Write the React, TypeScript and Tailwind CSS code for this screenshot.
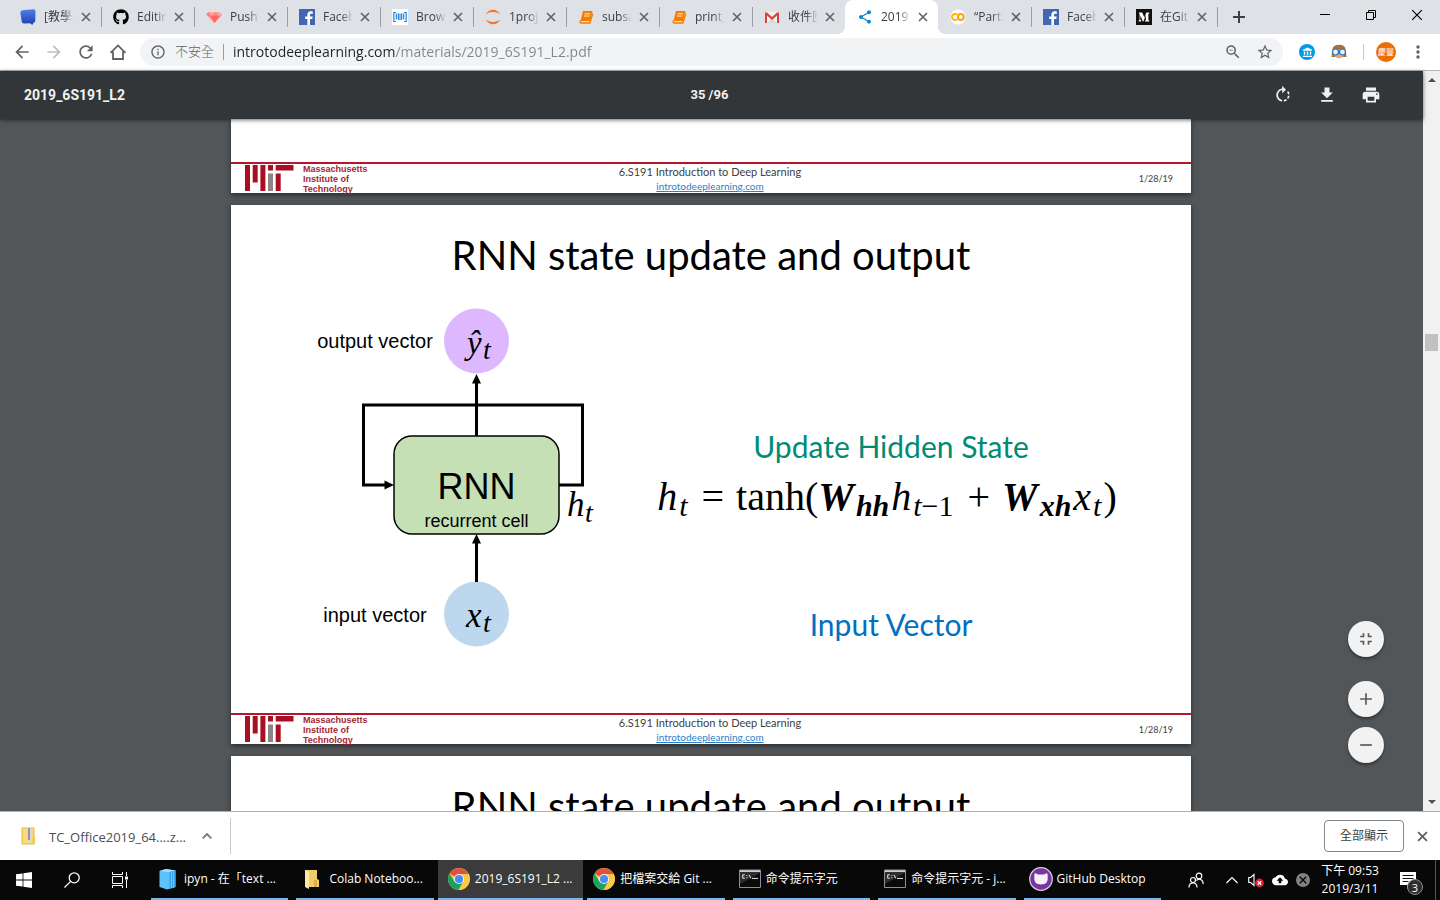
import type { ReactNode } from "react";
import {
  MdArrowBack,
  MdArrowForward,
  MdRefresh,
  MdInfoOutline,
  MdZoomOut,
  MdStarBorder,
  MdMoreVert,
  MdRotateRight,
  MdFileDownload,
  MdPrint,
  MdFullscreenExit,
  MdAdd,
  MdRemove,
  MdShare,
  MdAccountBalance,
  MdCloudUpload,
} from "react-icons/md";
import { FaGithub } from "react-icons/fa";

/* ---------- small drawings ---------- */

function Cross({ className }: { className: string }) {
  return (
    <svg viewBox="0 0 10 10" className={className} fill="none" stroke="currentColor">
      <path d="M1 1l8 8M9 1l-8 8" />
    </svg>
  );
}

function BlueNote() {
  return (
    <svg viewBox="0 0 16 16" className="size-4">
      <defs>
        <linearGradient id="note" x1="0" y1="0" x2="0" y2="1">
          <stop offset="0" stopColor="#4f80e6" />
          <stop offset="1" stopColor="#1b3fb4" />
        </linearGradient>
      </defs>
      <path d="M2.500 1.300 13.500.3Q15.600.3 15.500 2.500L15.300 11.500Q15.200 13.600 13.300 13.900L12.300 16 10 14.300 4 14.400Q2 14.400 1.700 12.500L.4 4Q.2 1.600 2.500 1.300Z" fill="url(#note)" />
    </svg>
  );
}

function Diamond() {
  return (
    <svg viewBox="0 0 16 16" className="size-4">
      <path d="M3 3h10l3 3-7.500 8L0 5z" fill="#ff8080" />
      <path d="M3 3l2 4 5-4zM10 3l3 4 3-1-3-3z" fill="#ffa9a4" />
      <path d="M5 7h8l-4.500 7z" fill="#f66" />
    </svg>
  );
}

function Facebook() {
  return (
    <svg viewBox="0 0 16 16" className="size-4">
      <path d="M0 0h16v16H0z" fill="#4267b2" />
      <path d="M11 16V10h2.300l.4-2.500H11V6c0-.9.400-1.300 1.400-1.300h1.400V2.400C13.300 2.300 12.500 2.200 11.700 2.200 9.600 2.200 8.400 3.500 8.400 5.700v1.800H6.200V10h2.200v6z" fill="#fff" />
    </svg>
  );
}

function Brackets() {
  return (
    <svg viewBox="0 0 16 16" className="size-4">
      <path d="M0 0h16v16H0z" fill="#fff" />
      <path d="M4 3.500H1.800v9H4M12 3.500h2.200v9H12" fill="none" stroke="#1e88e5" strokeWidth="1.200" />
      <path d="M4.500 4.500v6M6.800 4.500v6.500M9.200 4.500v6.500M11.500 4.500v6" stroke="#2e8fe8" strokeWidth="1.600" />
    </svg>
  );
}

function Jupyter() {
  return (
    <svg viewBox="0 0 16 16" className="size-4">
      <path d="M1 5.500C3 -.8 13 -.8 15 5.500 12 2.200 4 2.200 1 5.500ZM1 10.500C3 16.800 13 16.800 15 10.500 12 13.800 4 13.800 1 10.500Z" fill="#f37726" />
    </svg>
  );
}

function Notebook() {
  return (
    <svg viewBox="0 0 16 16" className="size-4">
      <path d="M5 2h9.500L12 12H2.500z" fill="#f57c00" />
      <path d="M2.600 11.500Q1.300 14 3.200 14h8.600L14.800 4.500" fill="none" stroke="#f57c00" strokeWidth="1.400" />
      <path d="M6.600 4.800h5.400M6 7h5.400" stroke="#fff3e0" strokeWidth="1" />
    </svg>
  );
}

function Gmail() {
  return (
    <svg viewBox="0 0 16 16" className="size-4">
      <path d="M2 3h12v11H2z" fill="#f2f2f2" />
      <path d="M3 14l5-4.500 5 4.500z" fill="#dadada" />
      <path d="M1 3.500h2L8 8l5-4.500h2V14h-2V6.500L8 11 3 6.500V14H1z" fill="#d6473a" />
    </svg>
  );
}

function Colab() {
  return (
    <svg viewBox="0 0 16 16" className="size-4">
      <circle cx="8" cy="8" r="7.500" fill="#fff" />
      <path d="M7 5.900a2.900 2.900 0 1 0 0 4.200" fill="none" stroke="#fbbc04" strokeWidth="2" />
      <circle cx="10.800" cy="8" r="2.900" fill="none" stroke="#f9a01b" strokeWidth="2" />
    </svg>
  );
}

function Medium() {
  return (
    <svg viewBox="0 0 16 16" className="size-4">
      <path d="M0 0h16v16H0z" fill="#12100e" />
      <path d="M3 3.500h3.200L8.400 8.600 10.400 3.500H13.300V4.300L12.400 5V11l.9.700v.8H9V11.700l.9-.7V6.200L7.400 12.500H6.900L4.300 6.600V10.700L5.300 11.800V12.500H2.600V11.800l1-1.100V5.200L3 4.300z" fill="#fff" />
    </svg>
  );
}

function Home() {
  return (
    <svg viewBox="0 0 20 20" className="size-5" fill="none" stroke="#5f6368" strokeWidth="1.800">
      <path d="M5 9.500V17h10V9.500M2.500 10.800 10 3.400 17.500 10.800" />
    </svg>
  );
}

function Chrome() {
  return (
    <svg viewBox="0 0 24 24" className="size-[22px]">
      <circle cx="12" cy="12" r="12" fill="#fbc943" />
      <path d="M12 12 1.600 6A12 12 0 0 1 22.400 6.500H12z" fill="#de5246" />
      <path d="M1.600 6A12 12 0 0 0 11.500 24L16.800 14.800 12 12 7.200 15z" fill="#1aa260" />
      <path d="M12 6.500h10.400A12 12 0 0 1 11.500 24l5.300-9.200z" fill="#fbc943" />
      <circle cx="12" cy="12" r="5.500" fill="#f1f1f1" />
      <circle cx="12" cy="12" r="4.400" fill="#4a8af4" />
    </svg>
  );
}

function NotebookBlue() {
  return (
    <svg viewBox="0 0 22 22" className="size-[22px]">
      <path d="M2.500 3 9 1l9.500 1.500V19L10 21.500 2.500 19z" fill="#5fc3fb" />
      <path d="M2.500 3 9 1l9.500 1.500-6 1.500z" fill="#a6e0ff" />
      <path d="M12.500 4l6-1.500V19l-6 2z" fill="#38a4ec" />
      <path d="M14.500 4v16M16.500 3.500V20" stroke="#78cbfb" strokeWidth=".8" />
    </svg>
  );
}

function Folder() {
  return (
    <svg viewBox="0 0 22 22" className="size-[22px]">
      <path d="M3 2h12v9l2 1v7H3z" fill="#f0cc6c" />
      <path d="M3 2l4 2v17l-4-2z" fill="#ffe8a2" />
      <path d="M12 12h3v7h-3z" fill="#dcae47" />
    </svg>
  );
}

function Terminal() {
  return (
    <svg viewBox="0 0 22 20" className="h-5 w-[22px]">
      <path d="M.5 1h21v17.500H.5z" fill="#0a0a0a" stroke="#8c9094" />
      <path d="M1 1.200h20v2H1z" fill="#c9d0d6" />
      <path d="M1 4h20L1 15z" fill="#2c2c2c" />
      <path d="M5.800 5.800H3.700v3.400h2.100M7.800 6.200v.9M7.800 8.300v.9M10 5.800l1.800 3.600M13 9.400h6" stroke="#eee" fill="none" />
    </svg>
  );
}

function GitHubDesktop() {
  return (
    <svg viewBox="0 0 24 24" className="size-6">
      <circle cx="12" cy="12" r="11.300" fill="#7b35a0" stroke="#d9cfe0" strokeWidth="1.200" />
      <path d="M6 6 9 7.500h6L18 6Q19 8 18.700 10 19.500 17.500 12 17.500T5.300 10Q5 8 6 6Z" fill="#f4f2f5" />
    </svg>
  );
}

function MitLogo() {
  return (
    <svg viewBox="0 0 50 26" className="h-[26px] w-[50px]">
      <path d="M0 0h5v26H0zM7.700 0h5v17.500h-5zM15.400 0h5v26h-5zM23 0h5v5.500h-5zM30.700 8.500h5V26h-5zM30.700 0H43.500v5.500H30.700zM40 0h8.500v5.500H40z" fill="#a80f22" />
      <path d="M23 8.500h5V26h-5z" fill="#8a8688" />
    </svg>
  );
}

/* ---------- browser chrome ---------- */

type Tab = { icon: ReactNode; title: string; active?: boolean };

const tabs: Tab[] = [
  { icon: <BlueNote />, title: "[教學]" },
  { icon: <FaGithub className="size-4 text-black" />, title: "Editing" },
  { icon: <Diamond />, title: "Push" },
  { icon: <Facebook />, title: "Faceb" },
  { icon: <Brackets />, title: "Brow" },
  { icon: <Jupyter />, title: "1proj" },
  { icon: <Notebook />, title: "subsa" },
  { icon: <Notebook />, title: "print_" },
  { icon: <Gmail />, title: "收件匣" },
  { icon: <MdShare className="size-4 text-[#0288d1]" />, title: "2019_", active: true },
  { icon: <Colab />, title: "“Part2" },
  { icon: <Facebook />, title: "Faceb" },
  { icon: <Medium />, title: "在Git" },
];

function TabStrip() {
  return (
    <header className="flex h-[34px] shrink-0 bg-[#dee1e6] pl-2">
      {tabs.map((tab, i) => (
        <div
          key={i}
          className={
            tab.active
              ? "relative flex w-[93px] items-center rounded-t-lg bg-white pl-3 before:absolute before:bottom-0 before:-left-2 before:size-2 before:bg-[radial-gradient(circle_at_0_0,transparent_8px,white_8px)] after:absolute after:-right-2 after:bottom-0 after:size-2 after:bg-[radial-gradient(circle_at_100%_0,transparent_8px,white_8px)]"
              : "flex w-[93px] items-center pl-3"
          }
        >
          {tab.icon}
          <span className="ml-2 w-[30px] overflow-hidden text-xs whitespace-nowrap text-[#3c4043] [mask-image:linear-gradient(to_right,black_60%,transparent)]">
            {tab.title}
          </span>
          <button aria-label="關閉分頁" className="ml-1 flex size-4 items-center justify-center text-[#5f6368]">
            <Cross className="size-[10px] [stroke-width:1.6]" />
          </button>
          {!tab.active && i !== 8 && <i className="-mr-px ml-auto h-5 w-px bg-[#9a9da1]" />}
        </div>
      ))}
      <button aria-label="新增分頁" className="ml-4 flex items-center text-[#3c4043]">
        <svg viewBox="0 0 12 12" className="size-3" stroke="currentColor" strokeWidth="2">
          <path d="M6 0v12M0 6h12" />
        </svg>
      </button>
      <div className="ml-auto flex h-[29px] text-black">
        <button aria-label="最小化" className="flex w-[46px] items-center justify-center">
          <svg viewBox="0 0 10 10" className="size-[10px]" stroke="currentColor"><path d="M0 4.500h10" /></svg>
        </button>
        <button aria-label="往下還原" className="flex w-[46px] items-center justify-center">
          <svg viewBox="0 0 10 10" className="size-[10px]" fill="none" stroke="currentColor"><path d="M.5 2.500h7v7h-7zM2.500 2.500v-2h7v7h-2" /></svg>
        </button>
        <button aria-label="關閉" className="flex w-[46px] items-center justify-center">
          <Cross className="size-3" />
        </button>
      </div>
    </header>
  );
}

function Toolbar() {
  return (
    <div className="flex h-[37px] shrink-0 items-center border-b border-[#b4b5b7] bg-white pl-3 text-[#5f6368]">
      <nav className="flex gap-3">
        <button aria-label="返回"><MdArrowBack className="size-5" /></button>
        <button aria-label="前進" className="text-[#bcbec1]"><MdArrowForward className="size-5" /></button>
        <button aria-label="重新載入"><MdRefresh className="size-5" /></button>
        <button aria-label="首頁"><Home /></button>
      </nav>
      <div className="ml-3 flex h-7 flex-1 items-center rounded-full bg-[#f1f3f4] pr-[9px] pl-[10px]">
        <MdInfoOutline className="size-4" />
        <label htmlFor="address" className="ml-[9px] w-[41px] text-[13px] font-light">不安全</label>
        <i className="ml-[7px] h-4 w-px bg-[#9a9da1]" />
        <input
          id="address"
          defaultValue="introtodeeplearning.com/materials/2019_6S191_L2.pdf"
          className="ml-[9px] min-w-0 flex-1 bg-[linear-gradient(to_right,#202124_162px,#80868b_162px)] bg-clip-text text-sm text-transparent outline-none"
        />
        <button aria-label="縮放"><MdZoomOut className="size-[18px]" /></button>
        <button aria-label="加入書籤" className="ml-[14px]"><MdStarBorder className="size-[18px]" /></button>
      </div>
      <button aria-label="擴充功能" className="ml-4 flex size-4 items-center justify-center rounded-full bg-[#039be5] text-white">
        <MdAccountBalance className="size-[11px]" />
      </button>
      <button aria-label="擴充功能二" className="ml-4">
        <svg viewBox="0 0 16 16" className="size-4">
          <path d="M1.500 5Q2.500 .8 8 .8T14.500 5L15.500 13H.5z" fill="#a5713c" />
          <path d="M3 5.500h10v6q-5 6.500-10 0z" fill="#f2a07b" />
          <circle cx="4.500" cy="8" r="3" fill="#e2f5ff" stroke="#1d74c4" strokeWidth="1.200" />
          <circle cx="11.500" cy="8" r="3" fill="#e2f5ff" stroke="#1d74c4" strokeWidth="1.200" />
          <path d="M5 13.500q3 1.500 6 0l-1 1.500H6z" fill="#fff3ea" />
        </svg>
      </button>
      <i className="ml-4 h-4 w-px bg-[#c9cbce]" />
      <button aria-label="個人檔案" className="ml-3 flex size-5 items-center justify-center rounded-full bg-[#ef6c00] text-[8px] text-white">
        慶豐
      </button>
      <button aria-label="選單" className="mr-3 ml-3"><MdMoreVert className="size-5" /></button>
    </div>
  );
}

/* ---------- slides ---------- */

function SlideFooter() {
  return (
    <footer className="grid h-[31px] shrink-0 grid-cols-3 border-t-2 border-[#b5162b] font-[Lato,sans-serif] text-[#404040]">
      <div className="flex gap-2 pl-[14px]">
        <div className="pt-px">
          <MitLogo />
        </div>
        <p className="font-['Liberation_Sans',sans-serif] text-[9px] leading-[10px] font-bold text-[#a31f34]">
          Massachusetts
          <br />
          Institute of
          <br />
          Technology
        </p>
      </div>
      <div className="flex flex-col items-center pr-[2px]">
        <p className="text-[11px] leading-[15px]">6.S191 Introduction to Deep Learning</p>
        <a href="http://introtodeeplearning.com" className="text-[10px] leading-[14px] text-[#2a7fcb] underline">
          introtodeeplearning.com
        </a>
      </div>
      <p className="self-center pr-[18px] text-right text-[9px]">1/28/19</p>
    </footer>
  );
}

function SlideTitle() {
  return (
    <h1 className="pt-[25px] text-center font-[Lato,sans-serif] text-[40px] leading-[50px] text-black">
      RNN state update and output
    </h1>
  );
}

function RnnDiagram() {
  return (
    <svg viewBox="0 0 300 350" className="h-[350px] w-[300px] shrink-0 font-['Liberation_Sans',sans-serif]">
      <circle cx="165.500" cy="41" r="32.500" fill="#deb8ff" />
      <circle cx="165.500" cy="314" r="32.500" fill="#bdd7ee" />
      <g fill="none" stroke="#000" strokeWidth="3">
        <path d="M248 185h23.500v-80H52.500v80H75" />
        <path d="M165.500 136V80M165.500 282v-42" />
      </g>
      <path d="M161 83.500 165.500 74l4.500 9.500zM161 243.500l4.500-9.500 4.500 9.500zM73.500 180.500 83 185l-9.500 4.500z" />
      <rect x="83" y="136" width="165" height="98" rx="18" fill="#c5e0b4" stroke="#000" strokeWidth="1.500" />
      <text x="64" y="48" fontSize="20" textAnchor="middle">output vector</text>
      <text x="64" y="322" fontSize="20" textAnchor="middle">input vector</text>
      <text x="165.500" y="199" fontSize="36" textAnchor="middle">RNN</text>
      <text x="165.500" y="227" fontSize="18" textAnchor="middle">recurrent cell</text>
      <g fontFamily="Liberation Serif, serif" fontStyle="italic">
        <text x="156" y="54" fontSize="33">ŷ</text>
        <text x="172" y="59" fontSize="28">t</text>
        <text x="155" y="327" fontSize="35">x</text>
        <text x="172" y="332" fontSize="28">t</text>
        <text x="256" y="216" fontSize="35">h</text>
        <text x="274" y="222" fontSize="28">t</text>
      </g>
    </svg>
  );
}

function Sub({ children }: { children: ReactNode }) {
  return <sub className="bottom-0 mx-[2px] align-[-6px] text-[30px]">{children}</sub>;
}

function Equation() {
  return (
    <p className="text-center font-['Liberation_Serif',serif] text-[40px] leading-[50px] whitespace-nowrap text-black">
      <i>h</i>
      <Sub><i>t</i></Sub>
      <span className="mx-3">=</span>
      tanh(
      <b><i>W</i></b>
      <Sub><b><i>hh</i></b></Sub>
      <i>h</i>
      <Sub><i>t</i>−1</Sub>
      <span className="mx-3">+</span>
      <b><i>W</i></b>
      <Sub><b><i>xh</i></b></Sub>
      <i>x</i>
      <Sub><i>t</i></Sub>)
    </p>
  );
}

function PdfViewer() {
  return (
    <main className="flex min-h-0 flex-1 bg-[#525659]">
      <div className="relative flex min-w-0 flex-1 flex-col">
        <div className="z-10 grid h-12 shrink-0 grid-cols-3 items-center bg-[#323639] pr-[42px] pl-6 font-[Roboto,sans-serif] text-[13px] font-bold text-[#f1f1f1] shadow-[0_1px_4px_rgba(0,0,0,0.6)]">
          <span className="text-sm">2019_6S191_L2</span>
          <div className="flex justify-center pl-[14px]">
            <input aria-label="頁碼" defaultValue="35" className="w-[18px] outline-none" />
            <span>/96</span>
          </div>
          <div className="flex justify-end gap-6">
            <button aria-label="順時針旋轉"><MdRotateRight className="size-5" /></button>
            <button aria-label="下載"><MdFileDownload className="size-5" /></button>
            <button aria-label="列印"><MdPrint className="size-5" /></button>
          </div>
        </div>

        <div className="flex min-h-0 flex-1 flex-col items-center gap-3 overflow-hidden pr-px">
          <section className="flex h-[74px] w-[960px] shrink-0 flex-col justify-end bg-white shadow-[0_2px_5px_rgba(0,0,0,0.5)]">
            <SlideFooter />
          </section>
          <section className="flex h-[539px] w-[960px] shrink-0 flex-col bg-white shadow-[0_2px_5px_rgba(0,0,0,0.5)]">
            <SlideTitle />
            <div className="flex flex-1 pt-5 pl-20">
              <RnnDiagram />
              <div className="flex-1 pt-[126px] pr-5 text-center font-[Lato,sans-serif] text-[30px] leading-10">
                <h2 className="text-[#008b74]">Update Hidden State</h2>
                <div className="flex justify-center pt-[6px] pr-2 pb-[82px]">
                  <Equation />
                </div>
                <h2 className="text-[#0070c0]">Input Vector</h2>
              </div>
            </div>
            <SlideFooter />
          </section>
          <section className="h-[539px] w-[960px] shrink-0 bg-white shadow-[0_2px_5px_rgba(0,0,0,0.5)]">
            <SlideTitle />
          </section>
        </div>

        <div className="absolute right-[39px] bottom-12 z-10 flex flex-col gap-[10px] text-[#5a5a5a]">
          <button aria-label="配合頁面大小" className="mb-[14px] flex size-9 items-center justify-center rounded-full bg-[#f2f2f2] shadow-[0_2px_3px_rgba(0,0,0,0.4)]">
            <MdFullscreenExit className="size-5" />
          </button>
          <button aria-label="放大" className="flex size-9 items-center justify-center rounded-full bg-[#f2f2f2] shadow-[0_2px_3px_rgba(0,0,0,0.4)]">
            <MdAdd className="size-5" />
          </button>
          <button aria-label="縮小" className="flex size-9 items-center justify-center rounded-full bg-[#f2f2f2] shadow-[0_2px_3px_rgba(0,0,0,0.4)]">
            <MdRemove className="size-5" />
          </button>
        </div>
      </div>

      <div className="flex w-[17px] shrink-0 flex-col items-center bg-[#f1f1f1] py-[7px]">
        <svg viewBox="0 0 8 4" className="h-1 w-2"><path d="M0 4l4-4 4 4z" fill="#505050" /></svg>
        <div className="mt-[252px] h-[17px] w-[13px] bg-[#c1c1c1]" />
        <svg viewBox="0 0 8 4" className="mt-auto h-1 w-2"><path d="M0 0l4 4 4-4z" fill="#505050" /></svg>
      </div>
    </main>
  );
}

/* ---------- bottom bars ---------- */

function DownloadBar() {
  return (
    <div className="flex h-[49px] shrink-0 items-center border-t border-[#b0b0b0] bg-white pr-3 text-[#5f6368]">
      <div className="flex h-9 w-[231px] items-center border-r border-[#c8cacc] pl-5">
        <svg viewBox="0 0 16 18" className="h-[18px] w-4">
          <path d="M2 1h12v16H2z" fill="#f7dc79" stroke="#e0b84a" />
          <path d="M12.500 10H15v7h-2.500z" fill="#f0c850" />
          <path d="M7 1h4v13H7z" fill="#d8d8d8" />
          <path d="M8 2h2M8 4h2M8 6h2M8 8h2M8 10h2M8 12h2" stroke="#555" />
        </svg>
        <span className="ml-[13px] w-[140px] pt-1 text-[13px] whitespace-nowrap text-[#4a4d51]">TC_Office2019_64....z...</span>
        <button aria-label="下載選項" className="ml-[13px]">
          <svg viewBox="0 0 10 6" className="h-[6px] w-[10px]" fill="none" stroke="#77797c" strokeWidth="1.800"><path d="M.7 5.300 5 1l4.300 4.300" /></svg>
        </button>
      </div>
      <button className="ml-auto h-8 w-20 rounded border border-[#80868b] text-xs text-[#3c4043]">全部顯示</button>
      <button aria-label="關閉下載列" className="ml-3 flex size-3 items-center justify-center">
        <Cross className="size-[11px] [stroke-width:1.700]" />
      </button>
    </div>
  );
}

const apps: { icon: ReactNode; label: string; active?: boolean }[] = [
  { icon: <NotebookBlue />, label: "ipyn - 在「text ..." },
  { icon: <Folder />, label: "Colab Noteboo..." },
  { icon: <Chrome />, label: "2019_6S191_L2 ...", active: true },
  { icon: <Chrome />, label: "把檔案交給 Git ..." },
  { icon: <Terminal />, label: "命令提示字元" },
  { icon: <Terminal />, label: "命令提示字元 - j..." },
  { icon: <GitHubDesktop />, label: "GitHub Desktop" },
];

function Taskbar() {
  return (
    <footer className="flex h-10 shrink-0 bg-[#080808] text-xs text-white">
      <button aria-label="開始" className="flex w-12 items-center justify-center">
        <svg viewBox="0 0 16 16" className="size-4" fill="#fff">
          <path d="M0 2.300 6.600 1.400V7.500H0zM7.400 1.300 16 0v7.500H7.400zM0 8.400h6.600v6.200L0 13.700zM7.400 8.400H16V16l-8.600-1.200z" />
        </svg>
      </button>
      <button aria-label="搜尋" className="flex w-12 items-center justify-center">
        <svg viewBox="0 0 16 16" className="size-4" fill="none" stroke="#fff" strokeWidth="1.300">
          <circle cx="10.200" cy="5.800" r="5" />
          <path d="M6.600 9.400.5 15.500" />
        </svg>
      </button>
      <button aria-label="工作檢視" className="flex w-12 items-center justify-center">
        <svg viewBox="0 0 16 16" className="size-4" fill="none" stroke="#fff">
          <path d="M.5 0v2.500h10V0M.5 16v-2.500h10V16M.5 4.500h10v7H.5zM14.500 0v4M14.500 8v8" />
          <path d="M13 4.500h3v3h-3z" fill="#fff" stroke="none" />
        </svg>
      </button>
      <div className="ml-[3px] grid max-w-[1018px] flex-1 grid-cols-7">
        {apps.map((app, i) => (
          <div key={i} className={app.active ? "" : "px-1"}>
            <button
              className={
                app.active
                  ? "flex size-full items-center border-b-2 border-[#76b9ed] bg-[#3b3b3b] pl-[9px] text-left"
                  : "flex size-full items-center border-b-2 border-[#76b9ed] pl-[5px] text-left"
              }
            >
              <span className="flex w-6 shrink-0 justify-center">{app.icon}</span>
              <span className="ml-1 whitespace-nowrap">{app.label}</span>
            </button>
          </div>
        ))}
      </div>
      <div className="ml-auto flex items-center">
        <button aria-label="連絡人">
          <svg viewBox="0 0 16 16" className="size-4" fill="none" stroke="#fff" strokeWidth="1.200">
            <circle cx="11" cy="4" r="2.800" />
            <path d="M8.500 8.500Q11 6 13.500 8 15.500 9.500 15 12" />
            <circle cx="5" cy="8" r="2.500" />
            <path d="M1 15.500Q1 11 5 11t4 4.500" />
          </svg>
        </button>
        <button aria-label="顯示隱藏的圖示" className="ml-[22px]">
          <svg viewBox="0 0 12 8" className="h-2 w-3" fill="none" stroke="#fff" strokeWidth="1.200"><path d="M.5 7 6 1.500 11.500 7" /></svg>
        </button>
        <button aria-label="音量" className="ml-[10px]">
          <svg viewBox="0 0 16 16" className="size-4">
            <path d="M.7 5.500h2L6 2.500v11l-3.300-3h-2z" fill="none" stroke="#fff" strokeWidth="1.100" />
            <circle cx="11.500" cy="11" r="4.400" fill="#e0202e" />
            <path d="M9.800 9.300l3.400 3.400M13.200 9.300l-3.400 3.400" stroke="#fff" strokeWidth="1.300" />
          </svg>
        </button>
        <button aria-label="雲端備份" className="ml-2"><MdCloudUpload className="size-4" /></button>
        <button aria-label="已停止" className="ml-2 flex size-[14px] items-center justify-center rounded-full bg-[#818181] text-black">
          <Cross className="size-2 [stroke-width:1.600]" />
        </button>
        <time className="ml-px w-[78px] text-center leading-[18px]">
          下午 09:53
          <br />
          2019/3/11
        </time>
        <button aria-label="通知" className="relative ml-[10px]">
          <svg viewBox="0 0 18 18" className="size-[18px]">
            <path d="M1 1h16v13h-5l-4 4v-4H1z" fill="#fff" />
            <path d="M3.500 4.500h11M3.500 7.500h11M3.500 10.500h6" stroke="#111" />
          </svg>
          <span className="absolute -right-[6px] -bottom-[6px] flex size-4 items-center justify-center rounded-full border border-[#8d8d8d] bg-[#2d2d2d] text-[11px] leading-none">
            3
          </span>
        </button>
        <i className="mr-1 ml-[18px] h-10 w-px bg-[#555]" />
      </div>
    </footer>
  );
}

export default function App() {
  return (
    <div className="flex h-screen flex-col overflow-hidden font-['Open_Sans','Noto_Sans_CJK_TC',sans-serif]">
      <TabStrip />
      <Toolbar />
      <PdfViewer />
      <DownloadBar />
      <Taskbar />
    </div>
  );
}
